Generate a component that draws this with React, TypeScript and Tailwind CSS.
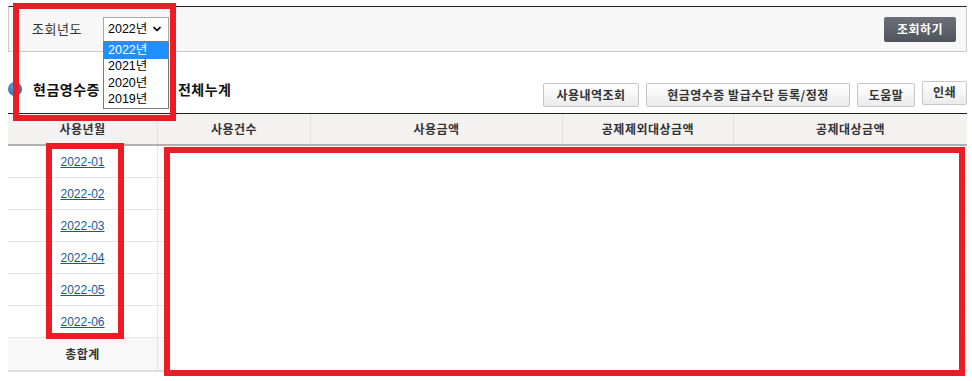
import React from "react";
import { ChevronDown } from "lucide-react";

const months = ["2022-01", "2022-02", "2022-03", "2022-04", "2022-05", "2022-06"];
const years = ["2022년", "2021년", "2020년", "2019년"];
const columns = ["사용년월", "사용건수", "사용금액", "공제제외대상금액", "공제대상금액"];

const ToolButton = ({ label, className }: { label: string; className?: string }) => (
    <button
        className={`h-[24px] rounded-[2px] border border-[#c6c6c6] bg-gradient-to-b from-white to-[#ebebeb] text-[12px] font-bold tracking-[0.5px] text-[#333] ${className ?? ""}`}
    >
        {label}
    </button>
);

const App: React.FC = () => {
    return (
        <div className="relative h-[381px] w-[972px] overflow-hidden bg-white font-['Noto_Sans_CJK_KR',sans-serif] text-[#333]">
            {/* Search panel */}
            <div className="pl-[8px] pr-[5px] pt-[6px]">
                <div className="flex h-[46px] items-center border border-[#cacaca] border-t-[#222] bg-[#f7f7f7] pl-[23px] pr-[10px]">
                    <span className="w-[71px] text-[13px] tracking-[0.5px] text-[#333]">조회년도</span>
                    <div className="flex h-[25px] w-[66px] items-center justify-between border border-[#a9a9a9] bg-white pl-[4px] pr-[5px] font-['Liberation_Sans','Noto_Sans_CJK_KR',sans-serif] text-[12.5px] text-black">
                        <span>2022년</span>
                        <ChevronDown size={12} strokeWidth={3.5} />
                    </div>
                    <button className="ml-auto h-[25px] w-[72px] rounded-[2px] bg-gradient-to-b from-[#6c7079] to-[#50545c] text-[12px] font-bold tracking-[0.5px] text-white">
                        조회하기
                    </button>
                </div>
            </div>

            {/* Title row (middle of the title sits under the open dropdown) */}
            <div className="flex h-[61px] items-start justify-between pl-[8px] pr-[5px]">
                <div className="mt-[27px] flex h-[20px] items-center">
                    <span className="h-[14px] w-[14px] rounded-full bg-[radial-gradient(circle_at_40%_40%,#5b9bd5,#1f5f9e)]" />
                    <span className="ml-[11px] flex gap-[8px] text-[14px] font-bold tracking-[0.5px] text-[#111]">
                        <span>현금영수증</span>
                        <span className="w-[62px]" />
                        <span>전체누계</span>
                    </span>
                </div>
                <div className="mt-[31px] flex gap-[7px]">
                    <ToolButton label="사용내역조회" className="w-[96px]" />
                    <ToolButton label="현금영수증 발급수단 등록/정정" className="w-[204px]" />
                    <ToolButton label="도움말" className="w-[58px]" />
                    <ToolButton label="인쇄" className="-mt-[2px] w-[45px] pb-[3px]" />
                </div>
            </div>

            {/* Table */}
            <div className="ml-[8px] mr-[5px] border-t border-[#222]">
                <div className="grid h-[32px] grid-cols-[150px_153px_252px_171px_233px] border-b-2 border-[#b0b0b0] bg-[#f3f2f0]">
                    {columns.map((c, i) => (
                        <div
                            key={c}
                            className={`flex items-center justify-center text-[12px] font-bold tracking-[0.5px] text-[#333] ${i < columns.length - 1 ? "border-r border-[#e2e1df]" : ""}`}
                        >
                            {c}
                        </div>
                    ))}
                </div>
                {months.map((m) => (
                    <div key={m} className="grid h-[32px] grid-cols-[150px_153px_252px_171px_233px] border-b border-[#e6e6e6]">
                        <div className="flex items-center justify-center border-r border-[#e6e6e6]">
                            <a href="#" className="font-['Liberation_Sans',sans-serif] text-[12px] text-[#17599b] underline">
                                {m}
                            </a>
                        </div>
                        <div className="border-r border-[#e6e6e6]" />
                        <div className="border-r border-[#e6e6e6]" />
                        <div className="border-r border-[#e6e6e6]" />
                        <div />
                    </div>
                ))}
                <div className="grid h-[34px] grid-cols-[150px_153px_252px_171px_233px] border-b-2 border-[#dedede] bg-[#f8f8f8]">
                    <div className="flex items-center justify-center border-r border-[#e6e6e6] text-[12px] font-bold tracking-[0.5px] text-[#333]">
                        총합계
                    </div>
                    <div className="border-r border-[#e6e6e6]" />
                    <div className="border-r border-[#e6e6e6]" />
                    <div className="border-r border-[#e6e6e6]" />
                    <div />
                </div>
            </div>

            {/* Open year dropdown */}
            <div className="absolute left-[103px] top-[41px] flex h-[68px] w-[66px] flex-col border border-[#7a7a7a] bg-white font-['Liberation_Sans','Noto_Sans_CJK_KR',sans-serif] text-[12.5px] text-black">
                {years.map((y, i) => (
                    <div key={y} className={`flex h-[16.5px] items-center pl-[4px] ${i === 0 ? "bg-[#1e90ff] text-white" : ""}`}>
                        {y}
                    </div>
                ))}
            </div>

            {/* Annotation boxes */}
            <div className="absolute left-[13px] top-[3px] h-[118px] w-[163px] border-[6px] border-[#ed1c24]" />
            <div className="absolute left-[46px] top-[143px] h-[196px] w-[78px] border-[6px] border-[#ed1c24]" />
            <div className="absolute left-[164px] top-[147px] h-[229px] w-[801px] border-[6px] border-[#ed1c24] bg-white" />
        </div>
    );
};

export default App;
